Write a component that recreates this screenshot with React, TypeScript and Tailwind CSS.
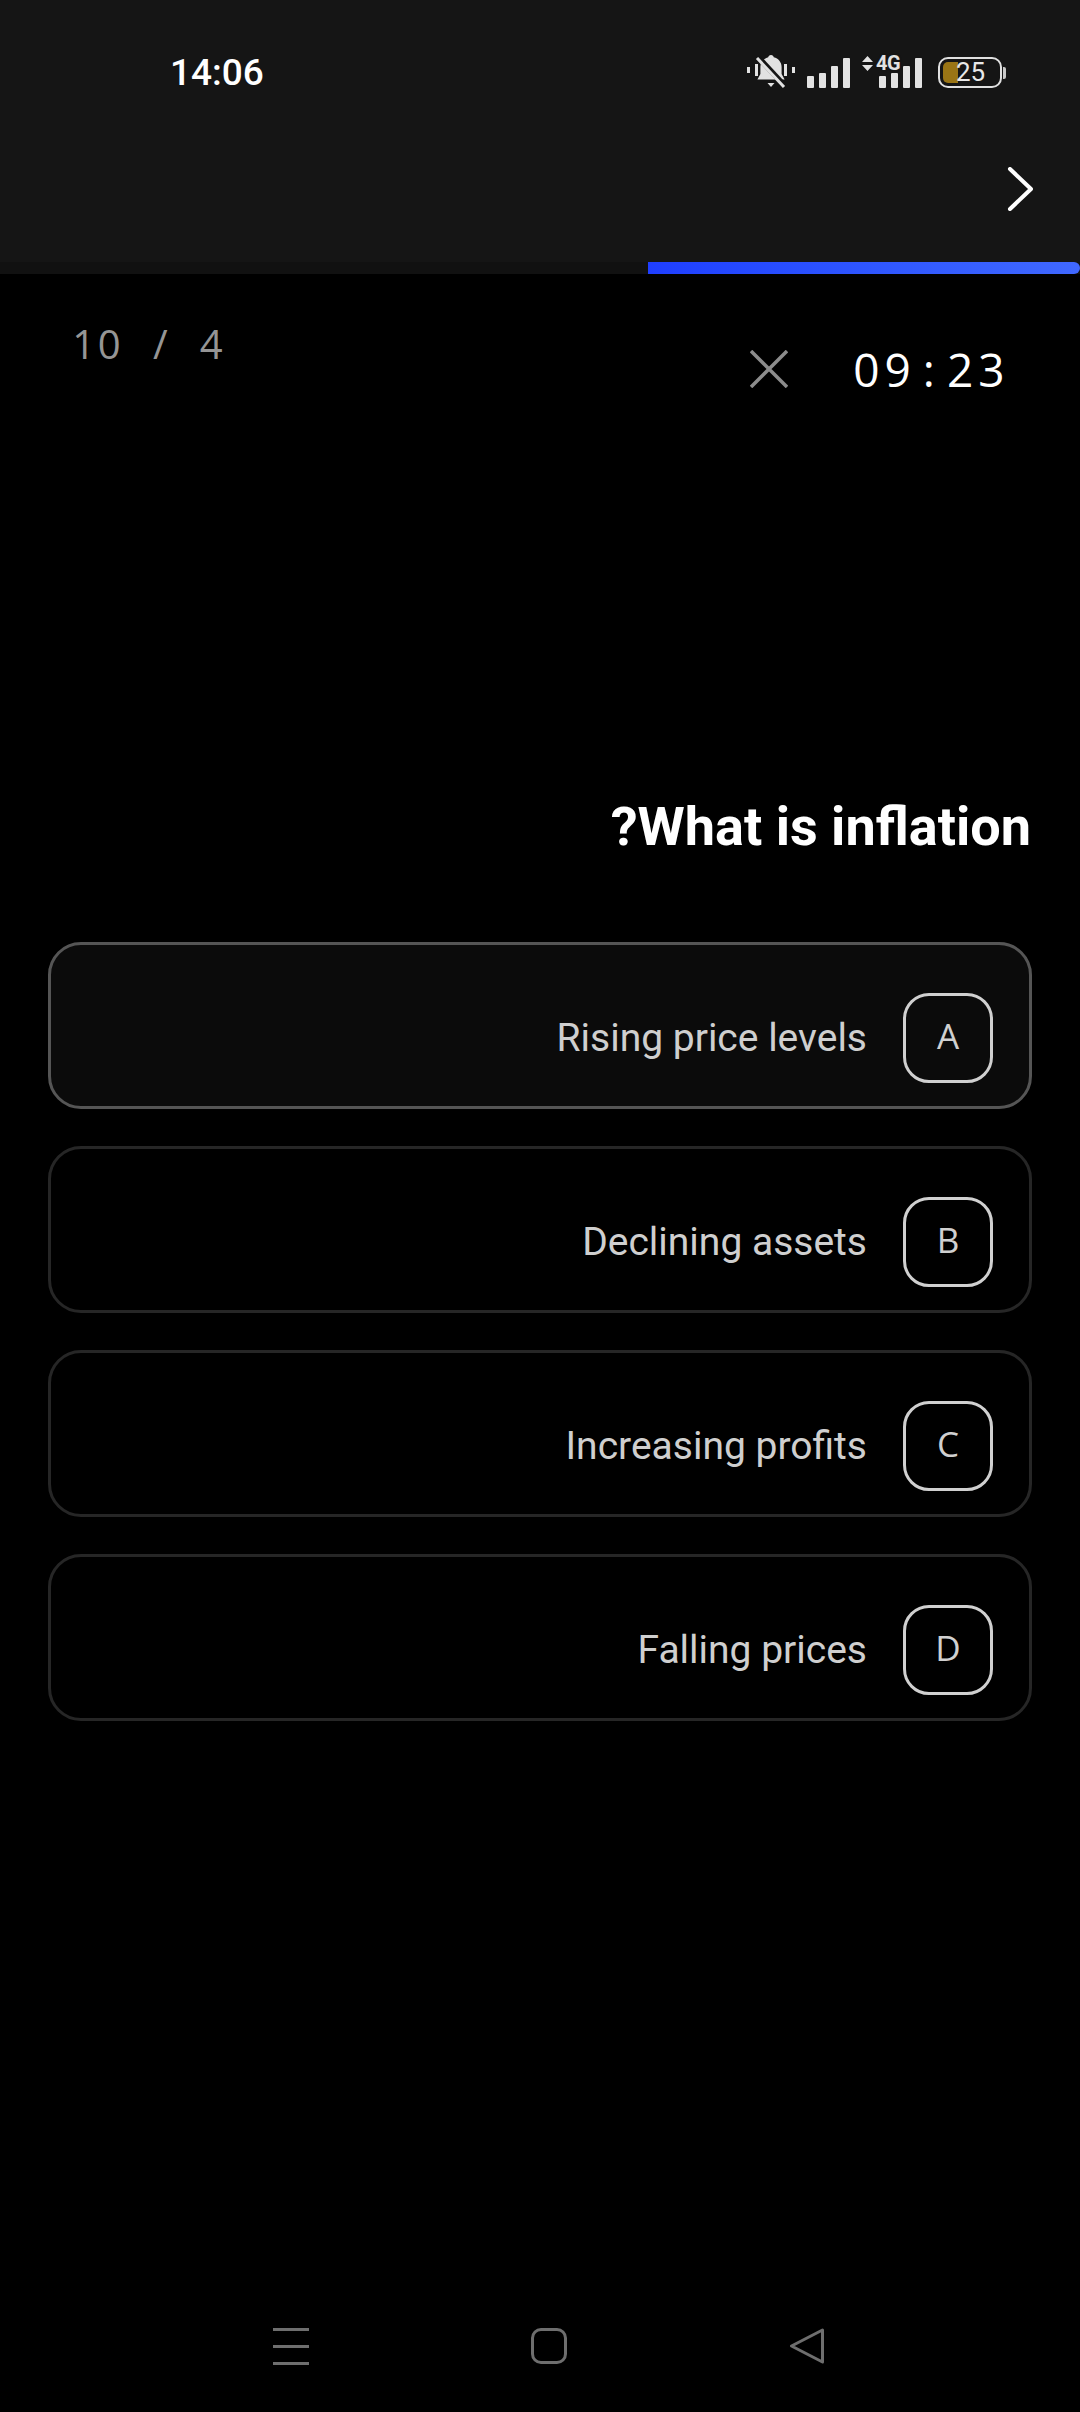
const options = [
  { text: "Rising price levels", letter: "A", active: true },
  { text: "Declining assets", letter: "B", active: false },
  { text: "Increasing profits", letter: "C", active: false },
  { text: "Falling prices", letter: "D", active: false },
];

function Signal() {
  return (
    <svg width="43" height="30" viewBox="0 0 43 30" fill="#e2e2e2">
      <rect x="0" y="18" width="7" height="12" rx="1" />
      <rect x="12" y="15" width="7" height="15" rx="1" />
      <rect x="24" y="8" width="7" height="22" rx="1" />
      <rect x="36" y="0" width="7" height="30" rx="1" />
    </svg>
  );
}

function Bell() {
  return (
    <svg width="48" height="34" viewBox="0 0 48 34" fill="#e2e2e2">
      <rect x="0" y="12" width="3" height="6" />
      <rect x="8" y="9" width="3" height="12" />
      <rect x="37" y="9" width="3" height="12" />
      <rect x="45" y="12" width="3" height="6" />
      <path d="M24 0c1.600 0 2.600 1 2.800 2.300 4.600 1.200 7.800 5 7.800 9.700v7l3 5.500H10.400l3-5.500v-7c0-4.700 3.200-8.500 7.800-9.700C21.400 1 22.400 0 24 0z" />
      <path d="M20.500 28h7L24 32z" />
      <path d="M11 2 38 31" stroke="#151515" strokeWidth="5.500" />
      <path d="M10 3 37 32" stroke="#e2e2e2" strokeWidth="3" />
    </svg>
  );
}

function StatusIcons() {
  return (
    <div className="mt-[1px] flex items-end">
      <Bell />
      <div className="mb-[1px] ml-[12px] flex">
        <Signal />
      </div>
      <div className="relative mb-[1px] ml-[29px] flex">
        <Signal />
        <div className="absolute left-[-17px] top-[-2px] flex items-center gap-[3px]">
          <svg width="11" height="15" viewBox="0 0 11 15" fill="#e2e2e2">
            <path d="M5.500 0 11 6H0zM0 9h11l-5.500 6z" />
          </svg>
          <span className="font-['Roboto',sans-serif] text-[20px] font-bold leading-[15px] tracking-[-0.5px] text-[#e2e2e2] [text-shadow:0_0_2px_#151515]">
            4G
          </span>
        </div>
      </div>
      <div className="mb-[1px] ml-[16px] flex items-center">
        <div className="flex h-[31px] w-[64px] items-center rounded-[10px] border-2 border-[#e0e0e0] pl-[3px]">
          <div className="relative h-[21px] w-[15px] rounded-l-[5px] bg-[#9a7515]">
            <span className="absolute left-[13px] top-[-3px] font-['Roboto',sans-serif] text-[26px] leading-[27px] text-[#e8e8e8]">
              25
            </span>
          </div>
        </div>
        <div className="ml-[1px] h-[12px] w-[3px] rounded-r-[2px] bg-[#c8c8c8]" />
      </div>
    </div>
  );
}

export default function App() {
  return (
    <div className="flex h-[2412px] w-[1080px] flex-col overflow-hidden bg-black font-['Roboto',sans-serif]">
      <header className="flex h-[274px] flex-col bg-[#151515]">
        <div className="flex items-start justify-between pl-[170px] pr-[74px] pt-[54px]">
          <span className="text-[37px] font-medium leading-[38px] text-white">14:06</span>
          <StatusIcons />
        </div>
        <div className="flex justify-end pr-[47px] pt-[75px]">
          <svg width="26" height="44" viewBox="0 0 26 44" fill="none" stroke="#fff" strokeWidth="4" strokeLinecap="round" strokeLinejoin="round">
            <path d="M3 2 24 22 3 42" />
          </svg>
        </div>
        <div className="mt-auto flex h-[12px] justify-end bg-[#111111]">
          <div className="h-full w-[432px] rounded-r-[6px] bg-gradient-to-r from-[#1f3eff] to-[#4068ff]" />
        </div>
      </header>

      <main className="flex flex-1 flex-col px-[48px]">
        <div className="flex items-start justify-between pl-[23px] pr-[25px] font-['Open_Sans',sans-serif]">
          <div className="flex pt-[44px] text-[40px] leading-[52px] text-[#959595]">
            <span className="w-[25.500px] text-center">1</span>
            <span className="w-[25.500px] text-center">0</span>
            <span className="w-[25.500px]" />
            <span className="w-[25.500px] text-center">/</span>
            <span className="w-[25.500px]" />
            <span className="w-[25.500px] text-center">4</span>
          </div>
          <div className="flex items-center pt-[75px]">
            <svg width="38" height="38" viewBox="0 0 38 38" fill="none" stroke="#8c8c8c" strokeWidth="3.500">
              <path d="M1 1 37 37M37 1 1 37" />
            </svg>
            <div className="ml-[63px] flex text-[46px] leading-[40px] text-white">
              <span className="w-[31.250px] text-center">0</span>
              <span className="w-[31.250px] text-center">9</span>
              <span className="w-[31.250px] text-center">:</span>
              <span className="w-[31.250px] text-center">2</span>
              <span className="w-[31.250px] text-center">3</span>
            </div>
          </div>
        </div>

        <h1 className="mt-[405px] pr-[1px] text-right text-[54px] font-bold leading-[66px] text-white">?What is inflation</h1>

        <div className="mt-[82px] flex flex-col gap-[37px]">
          {options.map((o) => (
            <div
              key={o.letter}
              className={
                o.active
                  ? "flex h-[167px] items-center justify-end gap-[36px] rounded-[33px] border-[3px] border-[#555555] bg-[#0b0b0b] pr-[36px] pt-[24px]"
                  : "flex h-[167px] items-center justify-end gap-[36px] rounded-[33px] border-[3px] border-[#262626] bg-black pr-[36px] pt-[24px]"
              }
            >
              <span className="text-[39px] leading-[48px] text-[#cfcfcf]">{o.text}</span>
              <span className="flex h-[90px] w-[90px] items-center justify-center rounded-[26px] border-[3px] border-[#d0d0d0] pb-[3px] font-['Open_Sans',sans-serif] text-[35px] text-[#d0d0d0]">
                {o.letter}
              </span>
            </div>
          ))}
        </div>
      </main>

      <nav className="flex h-[84px] items-start pl-[273px]">
        <div className="flex h-[37px] w-[36px] flex-col justify-between">
          <div className="h-[3px] bg-[#6e6e6e]" />
          <div className="h-[3px] bg-[#6e6e6e]" />
          <div className="h-[3px] bg-[#6e6e6e]" />
        </div>
        <div className="ml-[222px] h-[36px] w-[36px] rounded-[10px] border-[3px] border-[#6e6e6e]" />
        <svg className="ml-[222px]" width="36" height="36" viewBox="0 0 36 36" fill="none" stroke="#6e6e6e" strokeWidth="3" strokeLinejoin="round">
          <path d="M33.500 2 2.500 18 33.500 34Z" />
        </svg>
      </nav>
    </div>
  );
}
